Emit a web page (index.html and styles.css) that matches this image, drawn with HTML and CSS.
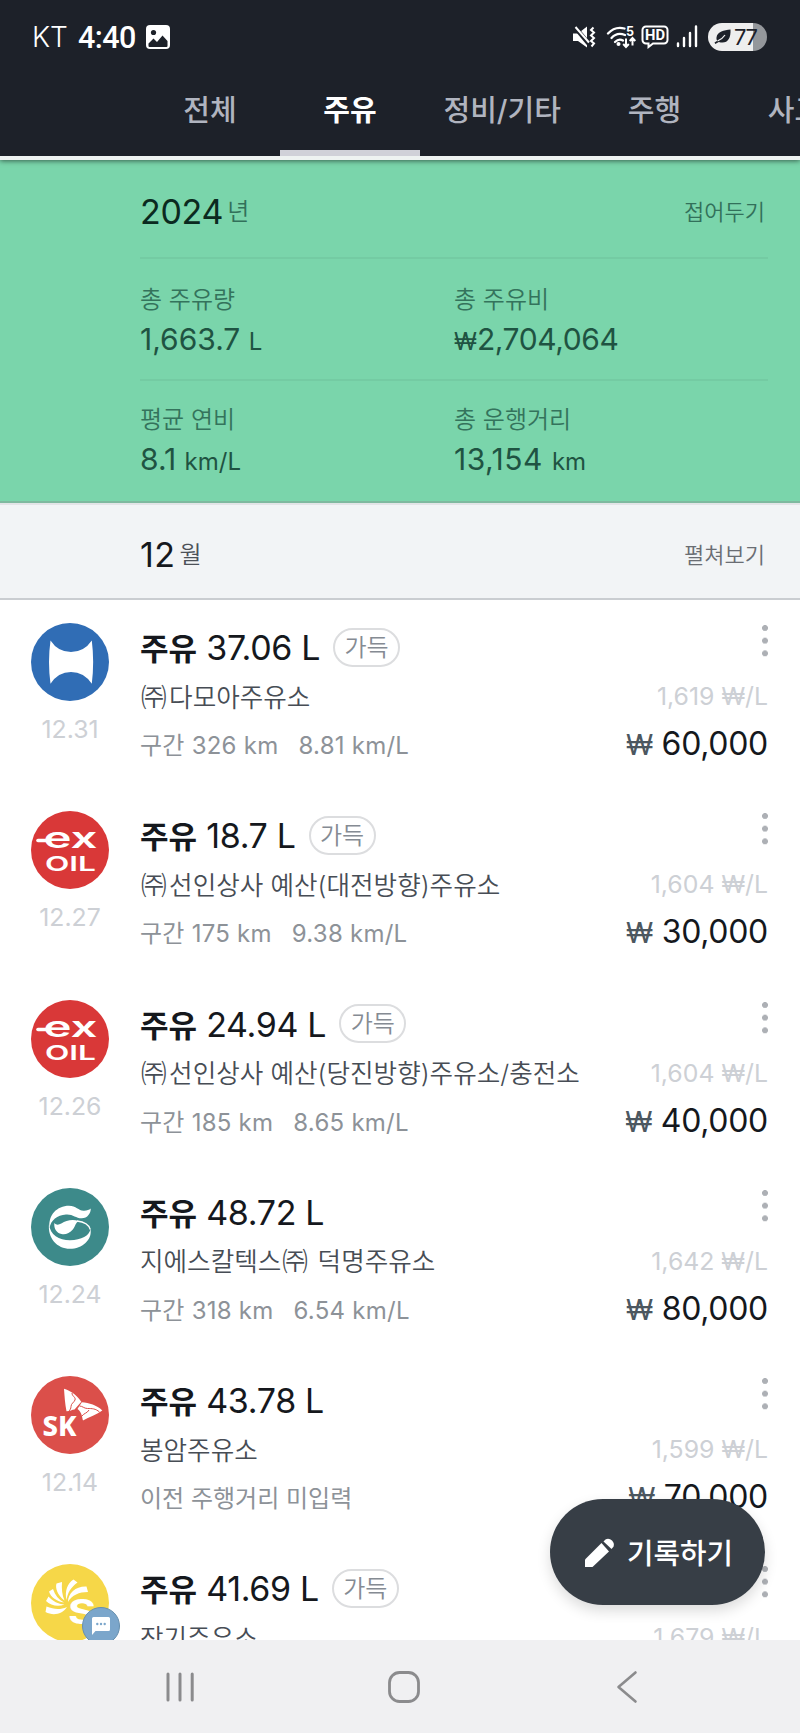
FILE: index.html
```html
<!DOCTYPE html>
<html lang="ko">
<head>
<meta charset="utf-8">
<title>주유 기록</title>
<link rel="stylesheet" href="styles.css">
</head>
<body>
<div class="phone">
  <header class="top">
    <div class="status">
      <span class="carrier">KT</span>
      <span class="clock">4:40</span>
      <svg class="gallery" width="24" height="24" viewBox="0 0 24 24"><rect width="24" height="24" rx="4" fill="#fff"/><circle cx="7.5" cy="7.5" r="2.6" fill="#1d2129"/><path d="M2.5 18.5 7.5 13.5 11 17 16.5 10.500 21.500 16V21a1 1 0 0 1-1 1h-17a1 1 0 0 1-1-1z" fill="#1d2129"/></svg>
      <div class="indicators">
        <svg width="24" height="24" viewBox="0 0 24 24"><path d="M1 8.500h5L15 1.500v21L6 16H1z" fill="#fff"/><path d="M2 1 17 19" stroke="#1d2129" stroke-width="4.500"/><path d="M3.500 2 17 17.500" stroke="#fff" stroke-width="2"/><path d="M21.500 2.500l-2.500 2.500 3 2.500-3 3 3 2.500-3 3 3 2.500-2.500 3" fill="none" stroke="#fff" stroke-width="2"/></svg>
        <svg class="wifi" width="31" height="24" viewBox="0 0 31 24"><g fill="none" stroke="#fff" stroke-width="2.300" stroke-linecap="round"><path d="M2 8.500C7 3 13 2 18.500 3.500"/><path d="M5.500 13C9 9 14 8 19 10"/><path d="M9 17c2.500-2.500 5.500-3 8-1.500"/></g><circle cx="12.500" cy="19" r="2" fill="#fff"/><text x="20" y="10.500" class="wifi-num">5</text><path d="M20 13.500v8M17.200 19l2.800 3 2.800-3M26.500 20.500v-7M23.700 16l2.800-3 2.800 3" fill="none" stroke="#fff" stroke-width="2"/></svg>
        <svg class="hd" width="28" height="24" viewBox="0 0 28 24"><path d="M5 1.500h18a3.500 3.500 0 0 1 3.500 3.500v10a3.500 3.500 0 0 1-3.500 3.500H12L7.500 22V18.500H5A3.500 3.500 0 0 1 1.500 15V5A3.500 3.500 0 0 1 5 1.500z" fill="none" stroke="#fff" stroke-width="2"/><text x="4" y="15.300" class="hd-text" textLength="20" lengthAdjust="spacingAndGlyphs">HD</text></svg>
        <svg class="signal" width="22" height="24" viewBox="0 0 22 24"><path d="M2 18.500V21M8 13v8M14 8v13M20 1.500V21" stroke="#fff" stroke-width="2.400" stroke-linecap="round"/></svg>
        <div class="battery">
          <svg width="17" height="16" viewBox="0 0 17 16"><path d="M16.500.5C10 1.500 3.500 2 2.500 8.500c-.2 1.500.2 2.500.8 3.300L.5 13.500l.8 1.500 3.500-2C13 15.500 17 10 16.500.5z" fill="#1d2129"/><path d="M3.500 12C6 11 9 9 11 6" stroke="#eee" stroke-width="1.300" fill="none"/></svg>
          <span>77</span>
        </div>
      </div>
    </div>
    <nav class="tabs">
      <span class="tab">전체</span>
      <span class="tab active">주유</span>
      <span class="tab">정비/기타</span>
      <span class="tab">주행</span>
      <span class="tab">사고</span>
    </nav>
  </header>

  <section class="year">
    <div class="heading"><div class="period">2024<small>년</small></div><span class="toggle">접어두기</span></div>
    <div class="stats">
      <div class="stat"><span class="label">총 주유량</span><span class="value">1,663.7 <small>L</small></span></div>
      <div class="stat"><span class="label">총 주유비</span><span class="value won"><small>₩</small>2,704,064</span></div>
    </div>
    <div class="stats second">
      <div class="stat"><span class="label">평균 연비</span><span class="value">8.1 <small>km/L</small></span></div>
      <div class="stat"><span class="label">총 운행거리</span><span class="value distance">13,154 <small>km</small></span></div>
    </div>
  </section>

  <section class="month heading"><div class="period">12<small>월</small></div><span class="toggle">펼쳐보기</span></section>

  <main class="list">
    <article class="row">
      <div class="brand">
        <svg class="logo" viewBox="0 0 78 78"><circle cx="39" cy="39" r="39" fill="#306db5"/><path d="M19.500 17.500Q27 29 40 29T60.800 17.500Q63.500 39 60.800 60.800 53 49 40 49T19.500 60.800Q16.500 39 19.500 17.500z" fill="#fff"/></svg>
        <span class="date">12.31</span>
      </div>
      <div class="info">
        <div class="title"><b>주유</b> 37.06 L<span class="badge">가득</span></div>
        <div class="name"><span class="corp">㈜</span>다모아주유소</div>
        <div class="detail"><span>구간 326 km</span><span>8.81 km/L</span></div>
      </div>
      <div class="cost"><i class="dots"></i><span class="unit">1,619 ₩/L</span><span class="price"><small>₩</small> 60,000</span></div>
    </article>

    <article class="row">
      <div class="brand">
        <svg class="logo" viewBox="0 0 78 78"><circle cx="39" cy="39" r="39" fill="#d93838"/><path d="M7 29.500h10" stroke="#fff" stroke-width="3.600" stroke-linecap="round"/><text x="12.500" y="37.300" class="logo-ex" textLength="54" lengthAdjust="spacingAndGlyphs">ex</text><text x="14" y="60" class="logo-oil" textLength="51" lengthAdjust="spacingAndGlyphs">OIL</text></svg>
        <span class="date">12.27</span>
      </div>
      <div class="info">
        <div class="title"><b>주유</b> 18.7 L<span class="badge">가득</span></div>
        <div class="name"><span class="corp">㈜</span>선인상사 예산(대전방향)주유소</div>
        <div class="detail"><span>구간 175 km</span><span>9.38 km/L</span></div>
      </div>
      <div class="cost"><i class="dots"></i><span class="unit">1,604 ₩/L</span><span class="price"><small>₩</small> 30,000</span></div>
    </article>

    <article class="row">
      <div class="brand">
        <svg class="logo" viewBox="0 0 78 78"><circle cx="39" cy="39" r="39" fill="#d93838"/><path d="M7 29.500h10" stroke="#fff" stroke-width="3.600" stroke-linecap="round"/><text x="12.500" y="37.300" class="logo-ex" textLength="54" lengthAdjust="spacingAndGlyphs">ex</text><text x="14" y="60" class="logo-oil" textLength="51" lengthAdjust="spacingAndGlyphs">OIL</text></svg>
        <span class="date">12.26</span>
      </div>
      <div class="info">
        <div class="title"><b>주유</b> 24.94 L<span class="badge">가득</span></div>
        <div class="name"><span class="corp">㈜</span>선인상사 예산(당진방향)주유소/충전소</div>
        <div class="detail"><span>구간 185 km</span><span>8.65 km/L</span></div>
      </div>
      <div class="cost"><i class="dots"></i><span class="unit">1,604 ₩/L</span><span class="price"><small>₩</small> 40,000</span></div>
    </article>

    <article class="row">
      <div class="brand">
        <svg class="logo" viewBox="0 0 78 78"><circle cx="39" cy="39" r="39" fill="#3d8a8a"/><g fill="#fff"><path d="M18.500 40C17 27 26 17.700 38 17.700c7 0 9.500 4.800 14.500 5 3.500.1 5.500-.8 7.200-2.200.3 4.500-3.200 9.800-9 9.800-6.200 0-8.700-4.300-15.700-3.800C26 27.200 20 32 18.500 40z"/><path d="M18 36c1 11 10 16.200 21 16.200 11.500 0 19.500-4.700 20.500-11.200C61.500 52 51 60.800 39 60.800 26 60.800 16.500 50 18 36z"/><path d="M23.300 35c2 2.200 4.200 2 7 .5 5-3 10.500-4.500 17.500-2.500-3.300 1.500-3.300 5-6 8.500-3 4-7.800 5.300-11.300 4.500-5-1-7.700-5.500-7.200-11z"/></g><path d="M46 33c7 .8 12 4 13.300 8.500" fill="none" stroke="#fff" stroke-width="1.300"/></svg>
        <span class="date">12.24</span>
      </div>
      <div class="info">
        <div class="title"><b>주유</b> 48.72 L</div>
        <div class="name">지에스칼텍스<span class="corp">㈜</span> 덕명주유소</div>
        <div class="detail"><span>구간 318 km</span><span>6.54 km/L</span></div>
      </div>
      <div class="cost"><i class="dots"></i><span class="unit">1,642 ₩/L</span><span class="price"><small>₩</small> 80,000</span></div>
    </article>

    <article class="row">
      <div class="brand">
        <svg class="logo" viewBox="0 0 78 78"><circle cx="39" cy="39" r="39" fill="#db4f4a"/><path d="M33 12.700C39 14.500 45 18 50.300 25.800L43.500 33.500C41 33.800 39 35 35.500 35.200 34 28 33.500 20 33 12.700z" fill="#fff"/><path d="M50.800 26.300C58 27 66 29 71.300 34.500 66 38.500 58 41 52 44.500 51 41 51 36.500 46.500 33z" fill="#fff"/><path d="M41 17c0 3.500 4 4 3 7-1 2.500-4 3.500-4 6.500 0 2-1 3.500-2 4.500M48.500 30c3 0 4.500 2.500 8 2.500 4.500 0 8 0 12 3.500M51 40c2-3 5-2.500 7-6" fill="none" stroke="#db4f4a" stroke-width="1"/><text x="11.500" y="60" class="logo-sk" textLength="34" lengthAdjust="spacingAndGlyphs">SK</text></svg>
        <span class="date">12.14</span>
      </div>
      <div class="info">
        <div class="title"><b>주유</b> 43.78 L</div>
        <div class="name">봉암주유소</div>
        <div class="detail plain"><span>이전 주행거리 미입력</span></div>
      </div>
      <div class="cost"><i class="dots"></i><span class="unit">1,599 ₩/L</span><span class="price"><small>₩</small> 70,000</span></div>
    </article>

    <article class="row">
      <div class="brand">
        <svg class="logo" viewBox="0 0 78 78"><circle cx="39" cy="39" r="39" fill="#f6d748"/><g fill="#fff"><path d="M37 38C37 29 45 22 55.500 22.500L57 28C48 28 41 31 37 38z"/><path d="M35.500 36C33.500 27 36.500 19 42.500 15.500L46.500 18.500C40 23 36.500 29 35.500 36z"/><path d="M33.500 36.500C26.500 31 24 24 25.500 19.500L31 18C30.500 25 31 31 33.500 36.500z"/><path d="M33 38.500C26 37.500 19.500 33 18 27.500L22 25C24 31 27.500 35.500 33 38.500z"/><path d="M33.500 40.500C27 43 19.500 41.500 15 37L17.500 32.500C22 37.500 27 40 33.500 40.500z"/><path d="M36 43C31 50.500 22 52 14.500 48L15.500 42.500C23 45.500 29 46 36 43z"/></g><text x="37" y="60" class="logo-s" textLength="28" lengthAdjust="spacingAndGlyphs">S</text></svg>
        <span class="memo"><svg width="20" height="20" viewBox="0 0 20 20"><path d="M2.500 1h15A1.500 1.500 0 0 1 19 2.500v11a1.500 1.500 0 0 1-1.500 1.500H4.500L1 19V2.500A1.500 1.500 0 0 1 2.500 1z" fill="#fff"/><g fill="#7ba6cb"><circle cx="6.300" cy="8" r="1.200"/><circle cx="10" cy="8" r="1.200"/><circle cx="13.700" cy="8" r="1.200"/></g></svg></span>
      </div>
      <div class="info">
        <div class="title"><b>주유</b> 41.69 L<span class="badge">가득</span></div>
        <div class="name">장기주유소</div>
      </div>
      <div class="cost"><i class="dots"></i><span class="unit">1,679 ₩/L</span></div>
    </article>
    <button class="fab"><svg width="32" height="32" viewBox="0 0 32 32"><path d="M1 23.500V31H8.500L25 15.500 17.500 7z" fill="#fff"/><path d="M19.500 5.500 21.800 3.200A6 6 0 0 1 29.500 10.800L27.500 13z" fill="#fff"/></svg><span>기록하기</span></button>
  </main>

  <footer class="navbar">
    <svg width="30" height="32" viewBox="0 0 30 32"><path d="M3 3v26M15 3v26M27.200 3v26" stroke="#8b8b8d" stroke-width="3" stroke-linecap="round"/></svg>
    <svg class="home" width="32" height="32" viewBox="0 0 32 32"><rect x="1.500" y="1.500" width="29" height="29" rx="10" fill="none" stroke="#8b8b8d" stroke-width="2.800"/></svg>
    <svg width="22" height="34" viewBox="0 0 22 34"><path d="M19.500 2.500 2.500 17 19.500 31.500" fill="none" stroke="#8b8b8d" stroke-width="2.600" stroke-linecap="round" stroke-linejoin="round"/></svg>
  </footer>
</div>
</body>
</html>
```
FILE: styles.css
```css
* { box-sizing: border-box; }
body {
  margin: 0;
  background: #fff;
  color: #15181d;
  font-family: Inter, "Noto Sans CJK KR", sans-serif;
}
svg { display: block; flex: none; }
.phone {
  width: 800px;
  height: 1733px;
  display: flex;
  flex-direction: column;
  overflow: hidden;
}

/* Header */
.top {
  flex: none;
  height: 160px;
  background: #1d2129;
  border-bottom: 4px solid #eef3f1;
  box-shadow: 0 1px 5px rgba(0, 0, 0, .55);
  z-index: 1;
}
.status {
  height: 73px;
  padding: 1px 33px 0 32px;
  display: flex;
  align-items: center;
  color: #fff;
}
.carrier { width: 46px; font-size: 28px; font-weight: 300; letter-spacing: -.2px; }
.clock { width: 68px; font: 500 30.500px Roboto, sans-serif; letter-spacing: -.6px; }
.indicators { margin-left: auto; display: flex; align-items: center; }
.wifi { margin-left: 10px; }
.wifi-num { font: 700 12.500px Inter, sans-serif; fill: #fff; }
.hd { margin-left: 4px; }
.hd-text { font: 700 15px Roboto, sans-serif; fill: #fff; }
.signal { margin-left: 7px; }
.battery {
  margin-left: 10px;
  width: 59px;
  height: 28px;
  padding-left: 6px;
  border-radius: 14px;
  display: flex;
  align-items: center;
  gap: 3px;
  background: linear-gradient(90deg, #eee 45px, #94979b 45px);
  color: #1d2129;
  font: 400 22px Inter, sans-serif;
  letter-spacing: -1.300px;
}
.tabs { height: 83px; padding-left: 140px; display: flex; white-space: nowrap; }
.tab {
  flex: none;
  min-width: 140px;
  padding: 0 23.500px;
  height: 83px;
  line-height: 76px;
  font-size: 29px;
  font-weight: 500;
  text-align: center;
  color: #b0b4bf;
  border-bottom: 0 solid #d0d1d8;
}
.tab.active { border-bottom-width: 6px; color: #fff; font-weight: 700; }

/* Year and month summaries */
.heading { display: flex; justify-content: space-between; align-items: center; }
.period { display: flex; align-items: baseline; font-size: 34px; line-height: 40px; }
.period small { margin-left: 4px; padding-bottom: 2px; font-size: 24px; line-height: 1; color: #4c5158; font-weight: 350; }
.period small { align-self: flex-end; padding-bottom: 8px; }
.toggle { margin-right: 3px; font-size: 22px; line-height: 38px; font-weight: 350; color: #6a6d73; }
.year {
  flex: none;
  height: 343px;
  padding: 0 32px 0 140px;
  background: #7ad5ab;
  border-bottom: 2px solid #7fb99f;
}
.year .heading { height: 97px; padding-top: 6px; }
.year .period { color: #0b2a20; letter-spacing: -.3px; }
.year .period small, .year .toggle { color: #32705a; }
.stats {
  height: 122px;
  padding-top: 22.500px;
  border-top: 2px solid #74cba3;
  display: grid;
  grid-template-columns: 314px 1fr;
}
.stats.second { padding-top: 20.500px; }
.stat { display: flex; flex-direction: column; }
.label { font-size: 24px; line-height: 36px; font-weight: 350; color: #34735c; }
.value { font-size: 30px; line-height: 42.500px; color: #1f5342; }
.value small { font-size: 24px; line-height: 1; letter-spacing: 0; }
.value.won { letter-spacing: -.4px; }
.value.distance { letter-spacing: .5px; }
.month {
  flex: none;
  height: 97px;
  padding: 6px 32px 0 140px;
  background: #f2f4f6;
  border-top: 2px solid #e3e4e7;
  border-bottom: 2px solid #cacdd1;
}
.month .period { letter-spacing: .4px; }

/* Records */
.list { position: relative; flex: 1; min-height: 0; overflow: hidden; background: #fff; }
.row { height: 188.300px; display: grid; grid-template-columns: 140px 1fr 160px; padding-right: 32px; }
.brand { position: relative; width: 140px; padding-top: 23px; display: flex; flex-direction: column; align-items: center; }
.logo { width: 78px; height: 78px; }
.date { margin-top: 12px; font-size: 24.800px; line-height: 32px; color: #cdd0d5; }
.memo {
  position: absolute;
  left: 82px;
  top: 66px;
  width: 38px;
  height: 38px;
  border-radius: 50%;
  border: 1px solid #668fae;
  background: #7ba6cb;
  display: flex;
  align-items: center;
  justify-content: center;
}
.logo-ex { font: 600 29px Inter, sans-serif; fill: #fff; }
.logo-oil { font: 600 20.500px Inter, sans-serif; fill: #fff; }
.logo-sk { font: 800 27.500px "Noto Sans", sans-serif; fill: #fff; }
.logo-s { font: 700 34px Inter, sans-serif; fill: #fff; }
.info { padding-top: 24px; white-space: nowrap; }
.title { height: 48.500px; line-height: 48.500px; font-size: 34px; letter-spacing: -.35px; display: flex; align-items: baseline; white-space: pre; }
.title b { font-size: 31px; font-weight: 700; letter-spacing: 0; }
.badge {
  align-self: flex-start;
  margin: 3.500px 0 0 13px;
  width: 67px;
  height: 39px;
  border: 2px solid #dcdddf;
  border-radius: 20px;
  font-size: 24px;
  font-weight: 350;
  line-height: 36px;
  letter-spacing: 0;
  text-align: center;
  color: #858b93;
}
.name { height: 48.500px; line-height: 49.500px; font-size: 25.600px; font-weight: 350; color: #474d55; }
.corp { margin-left: 1px; letter-spacing: 2.500px; }
.detail { display: flex; gap: 20px; height: 48.500px; line-height: 50px; font-size: 24px; letter-spacing: .25px; color: #8d9298; }
.detail.plain { letter-spacing: 0; }
.cost { padding-top: 24px; display: flex; flex-direction: column; align-items: flex-end; white-space: nowrap; }
.dots {
  width: 6px;
  height: 32px;
  margin: 1px 0 15px;
  background: radial-gradient(circle at 3px 3px, #adb0b5 2.700px, transparent 3.200px) 0 0 / 6px 12.700px repeat-y;
}
.unit { height: 48px; line-height: 48px; font-size: 24.800px; color: #cdd0d5; }
.price { height: 48px; line-height: 48px; font-size: 32px; letter-spacing: -.3px; }
.price small { font-size: 28.500px; line-height: 1; color: #4c5760; }

.fab {
  position: absolute;
  right: 35px;
  bottom: 35.500px;
  width: 215px;
  height: 106px;
  padding: 0 0 1px 34px;
  border: 0;
  border-radius: 53px;
  display: flex;
  align-items: center;
  gap: 11px;
  background: #373e46;
  color: #fff;
  font: 500 28.800px Inter, "Noto Sans CJK KR", sans-serif;
  box-shadow: 0 6px 14px rgba(0, 0, 0, .14);
}
.fab svg { margin-top: 1px; }

/* System navigation */
.navbar {
  flex: none;
  height: 93px;
  padding: 1px 162px 0 165px;
  background: #f0f0f2;
  display: flex;
  align-items: center;
  justify-content: space-between;
}
.home { margin-right: 4px; }
```
